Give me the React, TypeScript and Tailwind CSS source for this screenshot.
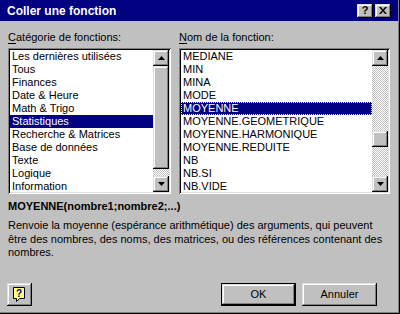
import React from "react";

const categories = [
  "Les dernières utilisées",
  "Tous",
  "Finances",
  "Date & Heure",
  "Math & Trigo",
  "Statistiques",
  "Recherche & Matrices",
  "Base de données",
  "Texte",
  "Logique",
  "Information",
];

const functions = [
  "MEDIANE",
  "MIN",
  "MINA",
  "MODE",
  "MOYENNE",
  "MOYENNE.GEOMETRIQUE",
  "MOYENNE.HARMONIQUE",
  "MOYENNE.REDUITE",
  "NB",
  "NB.SI",
  "NB.VIDE",
];

const raised =
  "bg-[#c0c0c0] shadow-[inset_-1px_-1px_#000,inset_1px_1px_#dfdfdf,inset_-2px_-2px_#808080,inset_2px_2px_#fff]";
const sunken =
  "p-[2px] shadow-[inset_1px_1px_#808080,inset_-1px_-1px_#fff,inset_2px_2px_#000,inset_-2px_-2px_#dfdfdf]";
const track =
  "bg-[repeating-conic-gradient(#ffffff_0_25%,#c0c0c0_0_50%)] bg-[length:2px_2px]";

function Arrow({ down }: { down?: boolean }) {
  return (
    <svg width="7" height="4" viewBox="0 0 7 4" className="block">
      {down ? <path d="M0 0h7L3.5 4z" fill="#000" /> : <path d="M0 4h7L3.5 0z" fill="#000" />}
    </svg>
  );
}

function ScrollButton({ down }: { down?: boolean }) {
  return (
    <div className={`${raised} w-[16px] h-[16px] flex items-center justify-center shrink-0`}>
      <Arrow down={down} />
    </div>
  );
}

function ListBox({
  items,
  selected,
  focus,
  thumb,
}: {
  items: string[];
  selected: number;
  focus?: boolean;
  thumb: "big" | "small";
}) {
  return (
    <div className={`${sunken} h-[146px] bg-white flex`}>
      <div className="flex-1 overflow-hidden bg-white">
        {items.map((it, i) => (
          <div
            key={it}
            className={`h-[13px] leading-[13px] pl-[2px] whitespace-nowrap ${
              i === selected
                ? `bg-[#000080] text-white ${focus ? "outline outline-1 outline-dotted outline-[#ffff80] -outline-offset-1" : ""}`
                : "text-black"
            }`}
          >
            {it}
          </div>
        ))}
      </div>
      <div className="w-[16px] flex flex-col">
        <ScrollButton />
        {thumb === "big" ? (
          <>
            <div className={`${raised} h-[103px]`} />
            <div className={`${track} flex-1`} />
          </>
        ) : (
          <>
            <div className={`${track} h-[65px]`} />
            <div className={`${raised} h-[16px]`} />
            <div className={`${track} flex-1`} />
          </>
        )}
        <ScrollButton down />
      </div>
    </div>
  );
}

function HelpIcon() {
  return (
    <svg width="17" height="17" viewBox="0 0 17 17" className="block">
      <path
        d="M2.5 1.5h11v11h-5l-3 3v-3h-3z"
        fill="#ffff80"
        stroke="#000"
        strokeWidth="1"
      />
      <text
        x="8"
        y="10.5"
        textAnchor="middle"
        fontSize="10"
        fontWeight="bold"
        fontFamily="Liberation Sans, Arial, sans-serif"
        fill="#000080"
      >
        ?
      </text>
    </svg>
  );
}

export default function App() {
  return (
    <div className="w-[400px] h-[314px] bg-[#c0c0c0] flex flex-col font-['Liberation_Sans',Arial,sans-serif] text-[11px] text-black shadow-[inset_-1px_-1px_#000,inset_-2px_-2px_#808080] pr-[2px] pb-[2px]">
      <div className="h-[21px] bg-[#000080] flex items-center pl-[7px] pr-[7px] shrink-0">
        <span className="text-white font-bold text-[12px] flex-1">Coller une fonction</span>
        <div className="flex gap-[2px]">
          <div className={`${raised} w-[16px] h-[14px] flex items-center justify-center font-bold text-[11px] leading-none`}>
            ?
          </div>
          <div className={`${raised} w-[16px] h-[14px] flex items-center justify-center`}>
            <svg width="8" height="7" viewBox="0 0 8 7" className="block">
              <path d="M0 0h2l2 2.5L6 0h2L5 3.5 8 7H6L4 4.5 2 7H0l3-3.5z" fill="#000" />
            </svg>
          </div>
        </div>
      </div>

      <div className="flex pl-[8px] pr-[8px] pt-[10px] gap-[8px]">
        <div className="w-[163px] flex flex-col">
          <div className="h-[17px] leading-[13px]">
            <span className="underline underline-offset-2">C</span>atégorie de fonctions:
          </div>
          <ListBox items={categories} selected={5} thumb="big" />
        </div>
        <div className="flex-1 flex flex-col">
          <div className="h-[17px] leading-[13px]">
            <span className="underline underline-offset-2">N</span>om de la fonction:
          </div>
          <ListBox items={functions} selected={4} focus thumb="small" />
        </div>
      </div>

      <div className="pl-[8px] pr-[8px] pt-[6px]">
        <div className="font-bold leading-[13px]">MOYENNE(nombre1;nombre2;...)</div>
        <p className="mt-[6px] leading-[13.5px] w-[380px]">
          Renvoie la moyenne (espérance arithmétique) des arguments, qui peuvent être des nombres, des
          noms, des matrices, ou des références contenant des nombres.
        </p>
      </div>

      <div className="mt-auto flex items-center pl-[7px] pr-[21px] pb-[6px]">
        <div className={`${raised} w-[25px] h-[23px] flex items-center justify-center`}>
          <HelpIcon />
        </div>
        <div className="flex-1" />
        <div className="border border-black">
          <div className={`${raised} w-[73px] h-[21px] flex items-center justify-center`}>OK</div>
        </div>
        <div className={`${raised} ml-[6px] w-[75px] h-[23px] flex items-center justify-center`}>
          Annuler
        </div>
      </div>
    </div>
  );
}
